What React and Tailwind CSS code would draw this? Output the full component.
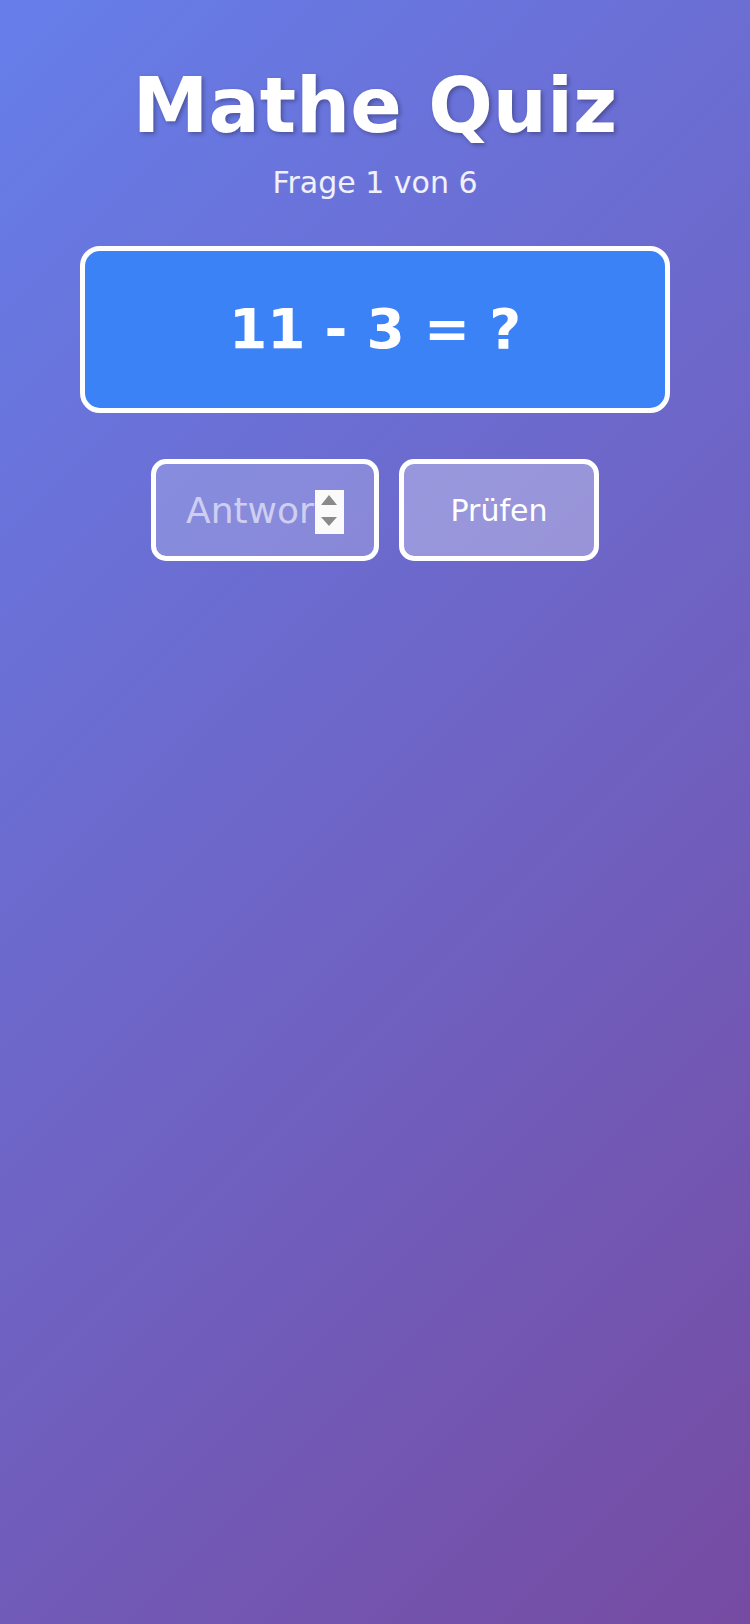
export default function App() {
  return (
    <div className="min-h-screen w-full bg-[linear-gradient(135deg,#667eea_0%,#764ba2_100%)] font-['DejaVu_Sans',sans-serif] text-white">
      <div className="flex flex-col items-center pt-[61px]">
        <h1 className="text-[76px] leading-[90px] font-bold [text-shadow:2px_2px_4px_rgba(0,0,0,0.3)]">
          Mathe Quiz
        </h1>
        <p className="mt-[14px] text-[30px] leading-[35px] text-white/90">Frage 1 von 6</p>
        <div className="mt-[46px] flex h-[167px] w-[590px] items-center justify-center rounded-[20px] border-[5px] border-white bg-[#3b82f6]">
          <span className="text-[55px] font-bold leading-[65px]">11 - 3 = ?</span>
        </div>
        <div className="mt-[46px] flex gap-5">
          <div className="relative w-[228px]">
            <input
              type="number"
              placeholder="Antwort"
              className="h-[102px] w-full rounded-[15px] border-[5px] border-white bg-white/20 pl-[30px] pr-[59px] py-6 text-center text-[36px] leading-[44px] text-white outline-none [appearance:textfield] placeholder:text-white/60 [&::-webkit-inner-spin-button]:appearance-none [&::-webkit-inner-spin-button]:m-0"
            />
            <span className="pointer-events-none absolute right-[35px] top-[31px] h-[44px] w-[29px] bg-[#fafafa]">
              <svg width="29" height="44" viewBox="0 0 29 44" className="block">
                <polygon points="6,15 22,15 14,5" fill="#8a8a8a" />
                <polygon points="6,27 22,27 14,36" fill="#8a8a8a" />
              </svg>
            </span>
          </div>
          <button className="h-[102px] w-[200px] rounded-[15px] border-[5px] border-white bg-white/30 text-[30px] text-white">
            Prüfen
          </button>
        </div>
      </div>
    </div>
  );
}
